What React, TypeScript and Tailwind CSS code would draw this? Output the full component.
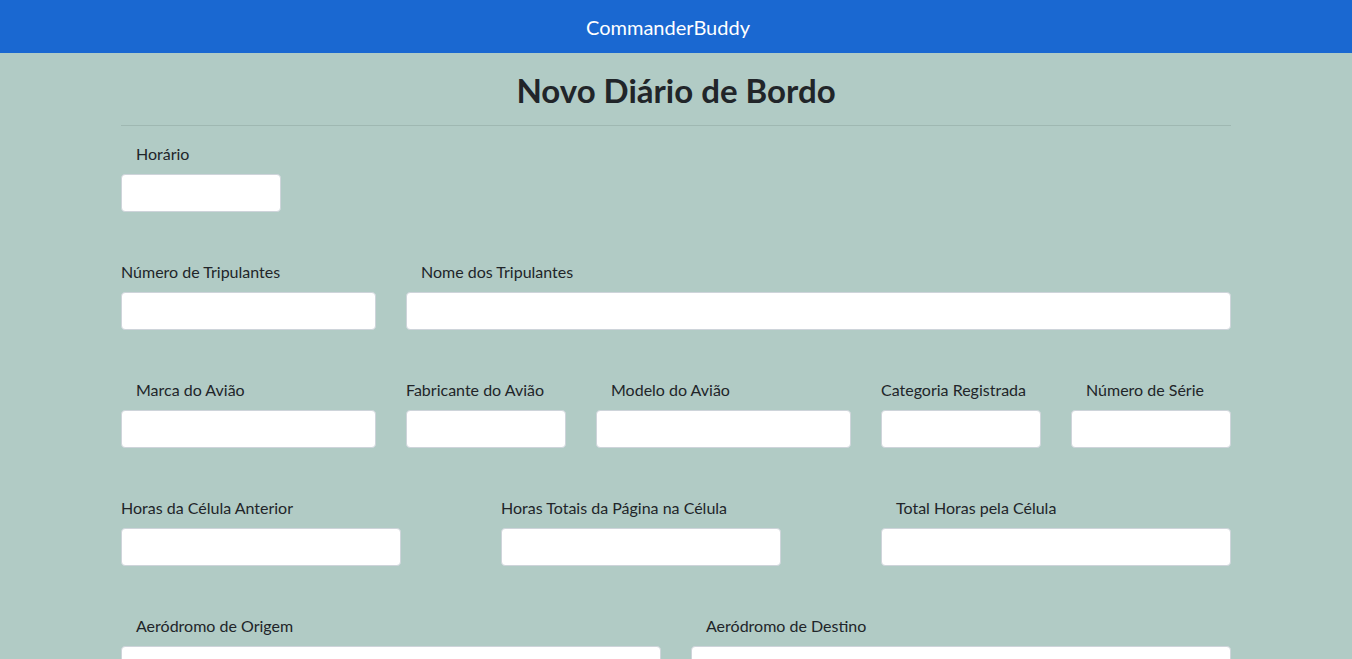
import React from 'react';

const font = { fontFamily: '"Lato", "Liberation Sans", sans-serif' };

interface FieldProps {
  label: string;
  span: string;
  indent?: boolean;
  inputWidth?: string;
}

const Field: React.FC<FieldProps> = ({ label, span, indent, inputWidth = 'w-full' }) => (
  <div className={`${span} px-[15px]`}>
    <label className={`block mb-2 text-base leading-6 text-[#212529] ${indent ? 'pl-[15px]' : ''}`}>{label}</label>
    <input
      type="text"
      className={`${inputWidth} h-[38px] rounded-[4px] border border-[#ced4da] bg-white px-3 text-base`}
    />
  </div>
);

const Row: React.FC<{ children: React.ReactNode }> = ({ children }) => (
  <div className="grid grid-cols-12 -mx-[15px] mb-12">{children}</div>
);

export default function App() {
  return (
    <div className="min-h-screen bg-[#b1cbc5] text-[#212529]" style={font}>
      <nav className="h-[53px] bg-[#1a68d1] flex items-center justify-center">
        <span className="text-white text-xl mr-4">CommanderBuddy</span>
      </nav>

      <div className="w-[1110px] mx-auto">
        <h1 className="text-[33px] font-bold leading-[1.2] text-center mt-[18px] mb-[14px]">Novo Diário de Bordo</h1>
        <hr className="border-0 border-t border-[#9fb8b2] mb-4" />

        <form>
          <Row>
            <Field label="Horário" span="col-span-2" indent />
          </Row>

          <Row>
            <Field label="Número de Tripulantes" span="col-span-3" />
            <Field label="Nome dos Tripulantes" span="col-span-9" indent />
          </Row>

          <Row>
            <Field label="Marca do Avião" span="col-span-3" indent />
            <Field label="Fabricante do Avião" span="col-span-2" />
            <Field label="Modelo do Avião" span="col-span-3" indent />
            <Field label="Categoria Registrada" span="col-span-2" />
            <Field label="Número de Série" span="col-span-2" indent />
          </Row>

          <Row>
            <Field label="Horas da Célula Anterior" span="col-span-4" inputWidth="w-[280px]" />
            <Field label="Horas Totais da Página na Célula" span="col-span-4" inputWidth="w-[280px]" />
            <Field label="Total Horas pela Célula" span="col-span-4" indent />
          </Row>

          <Row>
            <Field label="Aeródromo de Origem" span="col-span-6" indent />
            <Field label="Aeródromo de Destino" span="col-span-6" indent />
          </Row>
        </form>
      </div>
    </div>
  );
}
